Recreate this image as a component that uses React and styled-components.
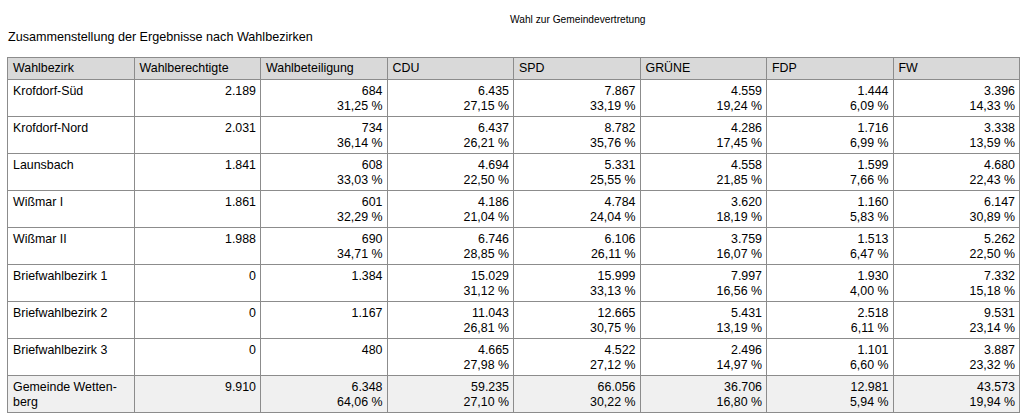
import React from "react";
import styled, { createGlobalStyle } from "styled-components";

const Global = createGlobalStyle`
  html, body { margin: 0; padding: 0; background: #fff; }
  body { font-family: "Liberation Sans", Arial, sans-serif; color: #000; }
`;

const Page = styled.div`
  padding: 14px 0 0 7px;
  width: 1024px;
  box-sizing: border-box;
`;

const Kicker = styled.div`
  font-size: 10.2px;
  line-height: 12px;
  padding-left: 503px;
`;

const Title = styled.h1`
  margin: 3px 0 0 1px;
  font-size: 12.6px;
  font-weight: normal;
  line-height: 16px;
`;

const Table = styled.table`
  margin-top: 12px;
  width: 1013px;
  table-layout: fixed;
  border-collapse: collapse;
  font-size: 12.4px;
  line-height: 15px;
`;

const Th = styled.th`
  background: #d9d9d9;
  border: 1px solid #8c8c8c;
  font-weight: normal;
  text-align: left;
  padding: 2px 5px 3px;
  height: 16px;
`;

const Row = styled.tr`
  background: ${(p) => (p.$total ? "#f0f0f0" : "#fff")};
`;

const Td = styled.td`
  border: 1px solid #8c8c8c;
  vertical-align: top;
  text-align: ${(p) => (p.$num ? "right" : "left")};
  padding: 4px ${(p) => (p.$num ? "4px" : "5px")} 2px 5px;
  height: 30px;
  white-space: nowrap;
`;

const Line = styled.div``;

const cols = ["Wahlbezirk", "Wahlberechtigte", "Wahlbeteiligung", "CDU", "SPD", "GRÜNE", "FDP", "FW"];

const rows = [
  ["Krofdorf-Süd", "2.189", ["684", "31,25 %"], ["6.435", "27,15 %"], ["7.867", "33,19 %"], ["4.559", "19,24 %"], ["1.444", "6,09 %"], ["3.396", "14,33 %"]],
  ["Krofdorf-Nord", "2.031", ["734", "36,14 %"], ["6.437", "26,21 %"], ["8.782", "35,76 %"], ["4.286", "17,45 %"], ["1.716", "6,99 %"], ["3.338", "13,59 %"]],
  ["Launsbach", "1.841", ["608", "33,03 %"], ["4.694", "22,50 %"], ["5.331", "25,55 %"], ["4.558", "21,85 %"], ["1.599", "7,66 %"], ["4.680", "22,43 %"]],
  ["Wißmar I", "1.861", ["601", "32,29 %"], ["4.186", "21,04 %"], ["4.784", "24,04 %"], ["3.620", "18,19 %"], ["1.160", "5,83 %"], ["6.147", "30,89 %"]],
  ["Wißmar II", "1.988", ["690", "34,71 %"], ["6.746", "28,85 %"], ["6.106", "26,11 %"], ["3.759", "16,07 %"], ["1.513", "6,47 %"], ["5.262", "22,50 %"]],
  ["Briefwahlbezirk 1", "0", ["1.384"], ["15.029", "31,12 %"], ["15.999", "33,13 %"], ["7.997", "16,56 %"], ["1.930", "4,00 %"], ["7.332", "15,18 %"]],
  ["Briefwahlbezirk 2", "0", ["1.167"], ["11.043", "26,81 %"], ["12.665", "30,75 %"], ["5.431", "13,19 %"], ["2.518", "6,11 %"], ["9.531", "23,14 %"]],
  ["Briefwahlbezirk 3", "0", ["480"], ["4.665", "27,98 %"], ["4.522", "27,12 %"], ["2.496", "14,97 %"], ["1.101", "6,60 %"], ["3.887", "23,32 %"]],
];

const total = [["Gemeinde Wetten-", "berg"], "9.910", ["6.348", "64,06 %"], ["59.235", "27,10 %"], ["66.056", "30,22 %"], ["36.706", "16,80 %"], ["12.981", "5,94 %"], ["43.573", "19,94 %"]];

function Cell({ value, num }) {
  const lines = Array.isArray(value) ? value : [value];
  return (
    <Td $num={num}>
      {lines.map((l, i) => (
        <Line key={i}>{l}</Line>
      ))}
    </Td>
  );
}

export default function App() {
  return (
    <>
      <Global />
      <Page>
        <Kicker>Wahl zur Gemeindevertretung</Kicker>
        <Title>Zusammenstellung der Ergebnisse nach Wahlbezirken</Title>
        <Table>
          <thead>
            <tr>
              {cols.map((c) => (
                <Th key={c}>{c}</Th>
              ))}
            </tr>
          </thead>
          <tbody>
            {rows.map((r) => (
              <Row key={r[0]}>
                {r.map((v, i) => (
                  <Cell key={i} value={v} num={i > 0} />
                ))}
              </Row>
            ))}
            <Row $total>
              {total.map((v, i) => (
                <Cell key={i} value={v} num={i > 0} />
              ))}
            </Row>
          </tbody>
        </Table>
      </Page>
    </>
  );
}
